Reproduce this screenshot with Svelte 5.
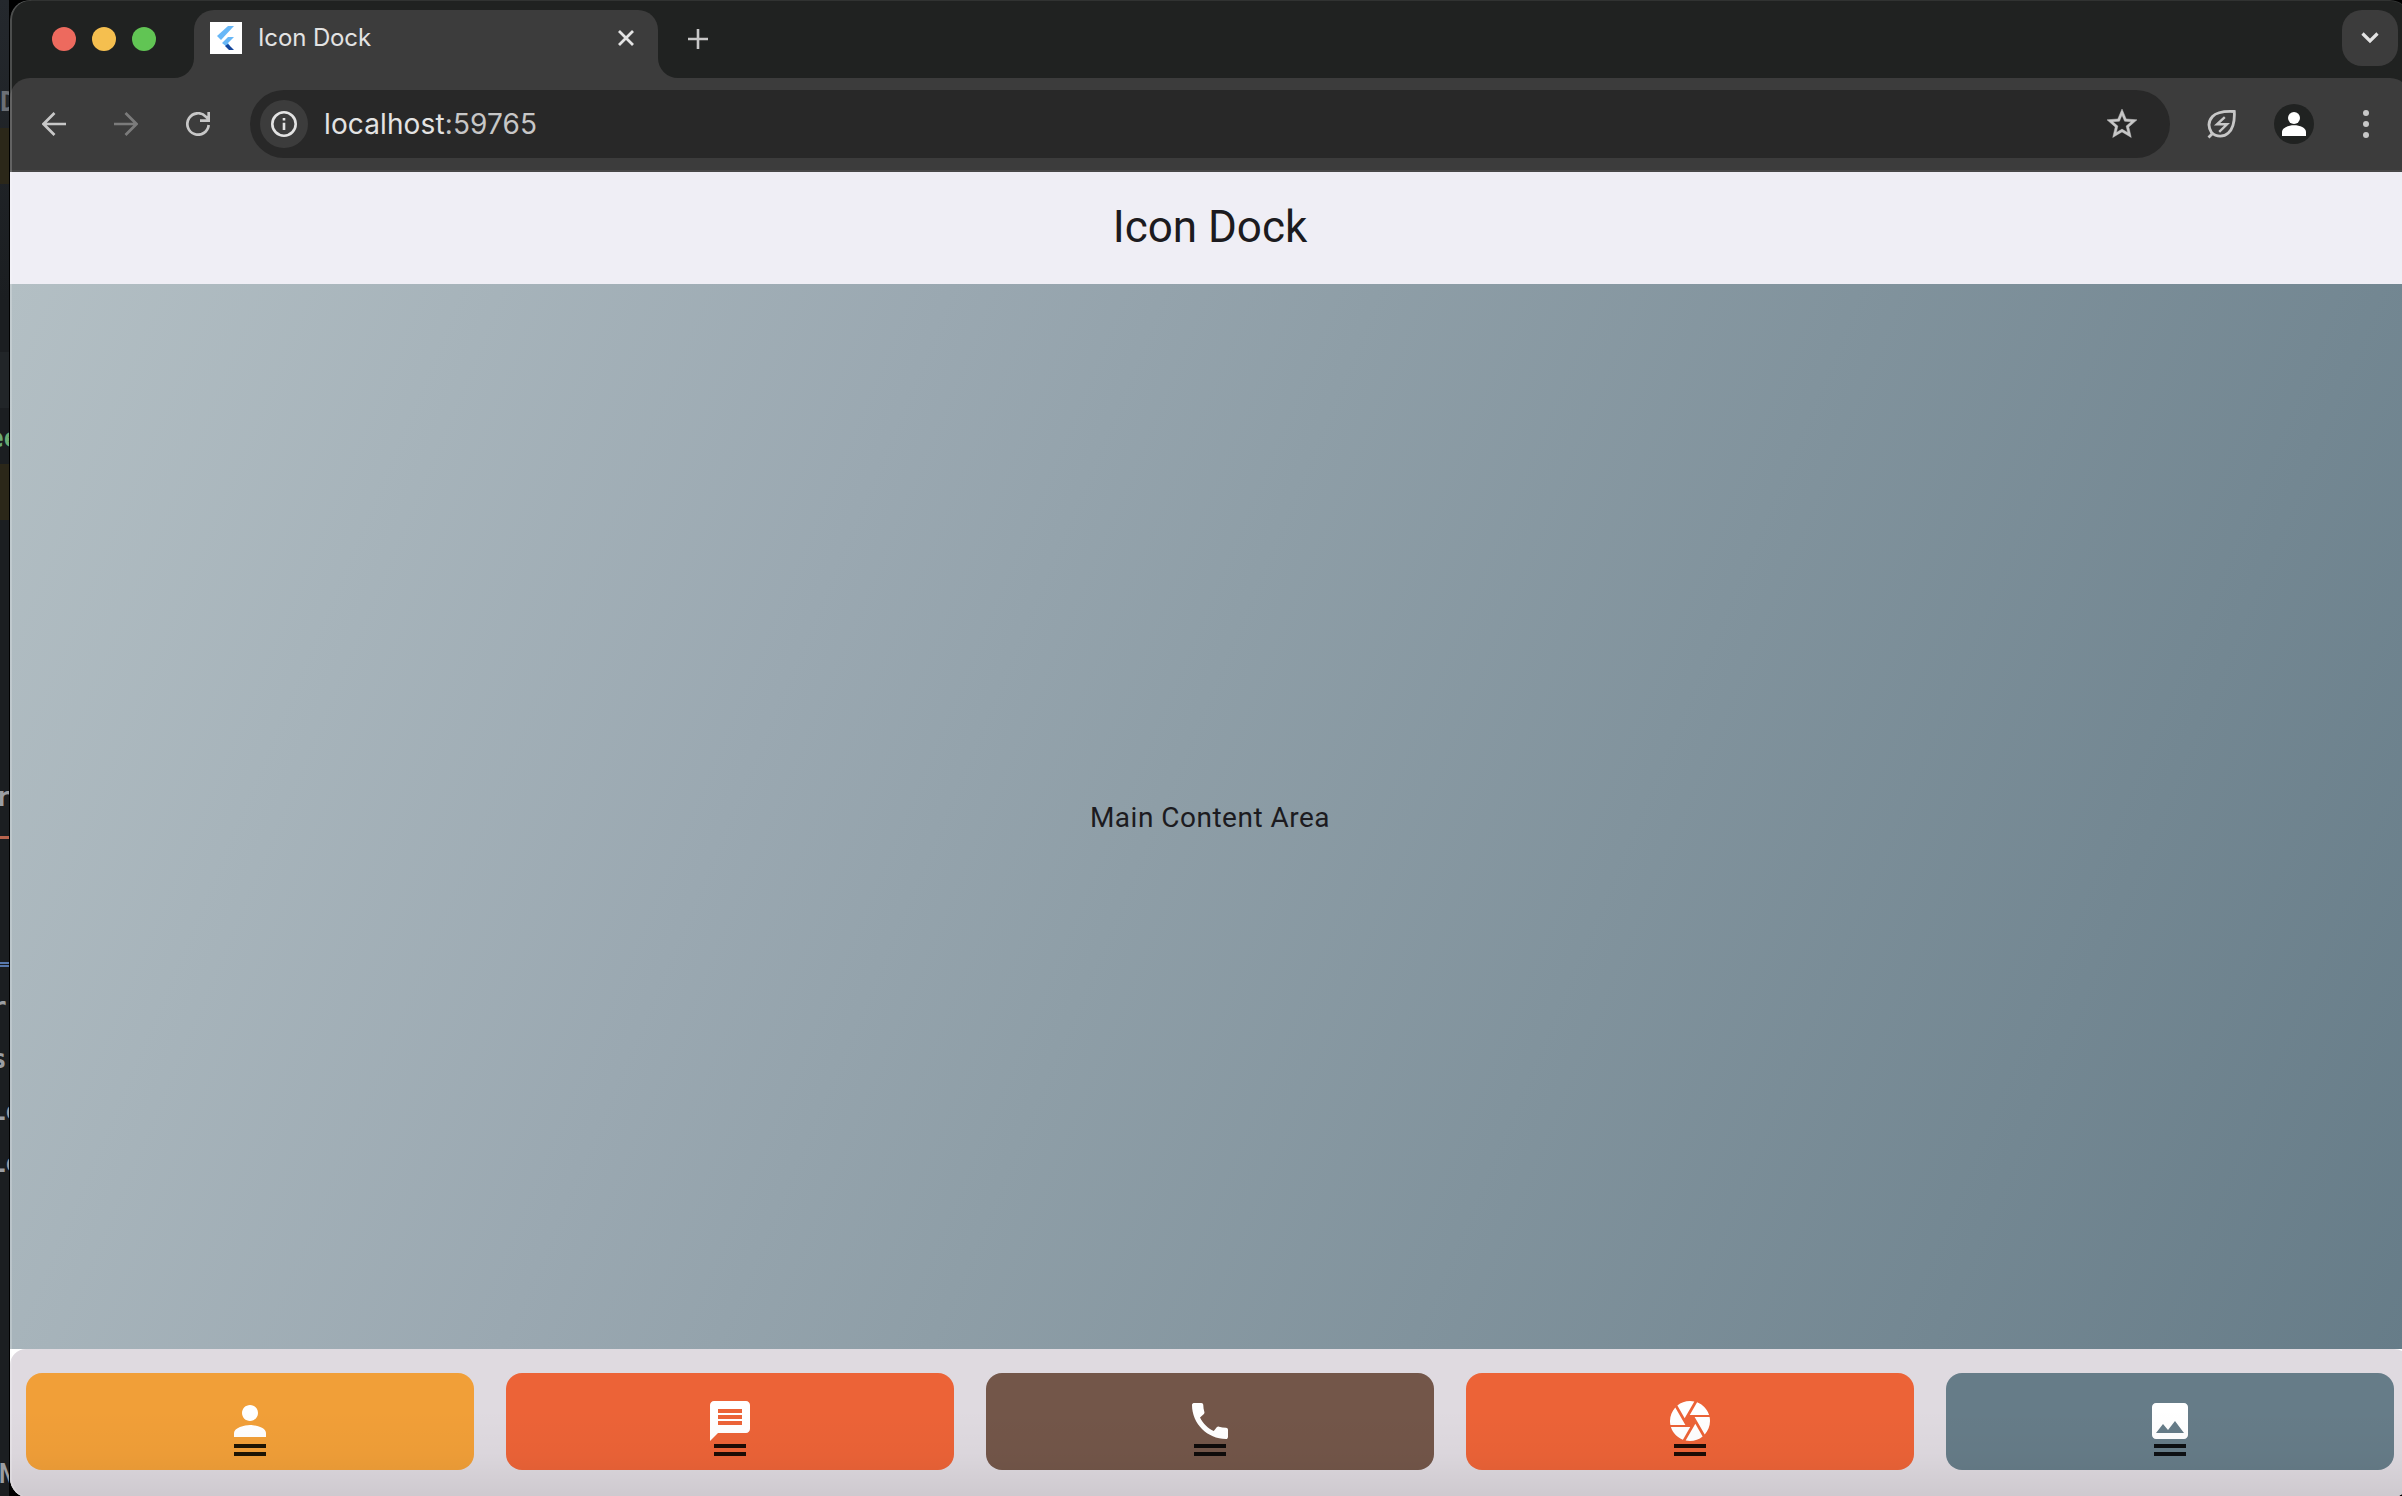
<script>
  const cards = [
    { name: 'person', color: '#f19f38', ink: '#1e1504', path: 'M12 12c2.21 0 4-1.79 4-4s-1.79-4-4-4-4 1.79-4 4 1.79 4 4 4zm0 2c-2.67 0-8 1.34-8 4v2h16v-2c0-2.66-5.33-4-8-4z' },
    { name: 'message', color: '#ec6337', ink: '#1d0c05', path: 'M20 2H4c-1.1 0-1.99.9-1.99 2L2 22l4-4h14c1.1 0 2-.9 2-2V4c0-1.1-.9-2-2-2zm-2 12H6v-2h12v2zm0-3H6V9h12v2zm0-3H6V6h12v2z' },
    { name: 'call', color: '#735649', ink: '#0e0b0a', path: 'M20.01 15.38c-1.23 0-2.42-.2-3.53-.56-.35-.12-.74-.03-1.01.24l-1.57 1.97c-2.83-1.35-5.48-3.9-6.89-6.83l1.95-1.66c.27-.28.35-.67.24-1.02-.37-1.11-.56-2.3-.56-3.53 0-.54-.45-.99-.99-.99H4.19C3.65 3 3 3.24 3 3.99 3 13.28 10.73 21 20.01 21c.71 0 .99-.63.99-1.18v-3.45c0-.54-.45-.99-.99-.99z' },
    { name: 'camera', color: '#ec6337', ink: '#1d0c05', path: 'M9.4 10.5l4.77-8.26C13.47 2.09 12.75 2 12 2c-2.4 0-4.6.85-6.32 2.25l3.66 6.35.06-.1zM21.54 9c-.92-2.92-3.15-5.26-6-6.34L11.88 9h9.66zm.26 1h-7.49l.29.5 4.76 8.25C21 16.97 22 14.61 22 12c0-.69-.07-1.35-.2-2zM8.54 12l-3.9-6.75C3.01 7.03 2 9.39 2 12c0 .69.07 1.35.2 2h7.49l-1.15-2zm-6.08 3c.92 2.92 3.15 5.26 6 6.34L12.12 15H2.46zm11.27 0l-3.9 6.76c.7.15 1.42.24 2.17.24 2.4 0 4.6-.85 6.32-2.25l-3.66-6.35-.93 1.6z' },
    { name: 'photo', color: '#667c88', ink: '#0d1013', path: 'M21 19V5c0-1.1-.9-2-2-2H5c-1.1 0-2 .9-2 2v14c0 1.1.9 2 2 2h14c1.1 0 2-.9 2-2zM8.500 13.500l2.500 3.010L14.500 12l4.500 6H5l3.500-4.500z' }
  ];
  // Fragments of the editor visible behind the browser window
  const scraps = [
    { t: 'D', y: 87, x: 0, c: '#6b6f75' },
    { t: 'ee', y: 423, x: -12, c: '#6aab73' },
    { t: 'r', y: 782, x: -4, c: '#9b9ea3' },
    { t: 'r', y: 992, x: -9, c: '#9b9ea3' },
    { t: 's', y: 1044, x: -9, c: '#9b9ea3' },
    { t: 'Lo', y: 1096, x: -10, c: '#9b9ea3' },
    { t: 'Lo', y: 1148, x: -10, c: '#9b9ea3' },
    { t: 'N', y: 1459, x: -1, c: '#9b9ea3' }
  ];
  const bands = [
    { y: 128, h: 56, c: '#2b2719' },
    { y: 352, h: 56, c: '#212528' },
    { y: 464, h: 56, c: '#2b2719' },
    { y: 836, h: 3, c: '#b8644e' },
    { y: 962, h: 2, c: '#5878ad' },
    { y: 965, h: 2, c: '#5878ad' }
  ];
</script>

<div class="desktop">
  <div class="editor">
    {#each bands as b}<i class="band" style="top:{b.y}px;height:{b.h}px;background:{b.c}"></i>{/each}
    {#each scraps as s}<span class="scrap" style="top:{s.y}px;left:{s.x}px;color:{s.c}">{s.t}</span>{/each}
  </div>
  <main class="window">
    <header class="tabs">
      <div class="lights"><i class="red"></i><i class="yellow"></i><i class="green"></i></div>
      <div class="tab">
        <svg class="flare left" viewBox="0 0 20 20"><path d="M20 0V20H0A20 20 0 0 0 20 0z" fill="#3c3c3c"/></svg>
        <svg class="favicon" viewBox="0 0 32 32">
          <path fill="#fff" d="M0 0h32v32H0z"/>
          <path fill="#67b7f7" d="M18 4h6L11 18l-4-4z"/>
          <path fill="#67b7f7" d="M18 15h6l-6 6 2 3-3 1-5-4z"/>
          <path fill="#13459c" d="M15 24l3-2 6 6h-5z"/>
        </svg>
        <span>Icon Dock</span>
        <svg class="close" viewBox="0 0 16 16"><path d="M1 1l14 14M15 1L1 15" stroke="#e3e3e3" stroke-width="2.8"/></svg>
        <svg class="flare right" viewBox="0 0 20 20"><path d="M0 0V20H20A20 20 0 0 1 0 0z" fill="#3c3c3c"/></svg>
      </div>
      <svg class="plus" viewBox="0 0 20 20"><path d="M10 0v20M0 10h20" stroke="#c7c7c7" stroke-width="2.6"/></svg>
      <div class="search">
        <svg viewBox="0 0 18 12"><path d="M1.5 1.5L9 9l7.500-7.500" fill="none" stroke="#e3e3e3" stroke-width="3.2"/></svg>
      </div>
    </header>
    <nav class="toolbar">
      <svg class="nav back" viewBox="0 0 24 24"><path d="M24 12H2M12.500 1L1.500 12l11 11" fill="none" stroke="#c7c7c7" stroke-width="2.7"/></svg>
      <svg class="nav fwd" viewBox="0 0 24 24"><path d="M0 12h22M11.500 1l11 11-11 11" fill="none" stroke="#7b7b7b" stroke-width="2.7"/></svg>
      <svg class="nav reload" viewBox="0 0 24 24"><path d="M22.700 13A10.700 10.700 0 1 1 20 4.800L22.700 7.500M22.700 0v8.700H14" fill="none" stroke="#c7c7c7" stroke-width="2.700"/></svg>
      <div class="omnibox">
        <div class="info">
          <svg viewBox="0 0 26 26"><circle cx="13" cy="13" r="11.700" fill="none" stroke="#e3e3e3" stroke-width="2.600"/><path d="M11.700 11.700h2.600V19h-2.600zM11.700 7h2.600v2.600h-2.600z" fill="#e3e3e3"/></svg>
        </div>
        <span class="url">localhost<em>:59765</em></span>
        <svg class="star" viewBox="0 0 24 24"><path fill="#c7c7c7" stroke="#c7c7c7" stroke-width=".3" d="M22 9.240l-7.190-.62L12 2 9.190 8.630 2 9.240l5.460 4.730L5.820 21 12 17.270 18.180 21l-1.630-7.030L22 9.240zM12 15.400l-3.760 2.270 1-4.280-3.320-2.880 4.380-.38L12 6.100l1.710 4.040 4.380.38-3.320 2.880 1 4.280L12 15.400z"/></svg>
      </div>
      <svg class="leaf" viewBox="0 0 30 30">
        <path d="M27.300 2.500C18 2 10 2.500 5.500 7.500 1.500 12 1 18 4.500 23.500c5 5 12.500 4.500 16.800.5 5.500-5 6.500-12 6-21.500zM1.500 28.500l4-4" fill="none" stroke="#c7c7c7" stroke-width="2.800"/>
        <path d="M17.800 8.200L10 15.300h10L12.200 22.800" fill="none" stroke="#c7c7c7" stroke-width="2.400"/>
      </svg>
      <div class="avatar"><svg viewBox="0 0 24 24"><circle cx="12" cy="6" r="6" fill="#fff"/><path d="M0 24v-4c0-4 6-6.700 12-6.700s12 2.700 12 6.700v4z" fill="#fff"/></svg></div>
      <div class="dots"><i></i><i></i><i></i></div>
    </nav>
    <div class="appbar">Icon Dock</div>
    <section class="content">Main Content Area</section>
    <div class="dockwrap">
      <div class="dock">
        {#each cards as c (c.name)}
          <div class="card" style="background:{c.color};color:{c.ink}">
            <svg viewBox="0 0 24 24"><path fill="#fff" d={c.path} /></svg>
            <i class="bar"></i><i class="bar"></i>
          </div>
        {/each}
      </div>
    </div>
    <i class="edge"></i>
  </main>
</div>

<style>
  .desktop { position: relative; width: 2402px; height: 1496px; overflow: hidden; display: flex; background: #000; }
  .editor { position: relative; flex: none; width: 9px; overflow: hidden; background: linear-gradient(#24282d, #1b1e21 300px); border-right: 1px solid #000; }
  .band { position: absolute; left: 0; width: 9px; }
  .scrap { position: absolute; font: bold 26px/30px "DejaVu Sans Mono", monospace; }
  .window { position: relative; flex: none; width: 2400px; height: 1498px; border-radius: 20px; overflow: hidden; display: flex; flex-direction: column; background: #202221; }
  .edge { position: absolute; inset: 0; border-radius: 20px; box-shadow: inset 2px 0 rgba(255, 255, 255, .2), inset 0 1px rgba(255, 255, 255, .08); }
  .tabs { height: 78px; flex: none; display: flex; align-items: center; }
  .lights { display: flex; gap: 16px; margin-left: 42px; }
  .lights i { width: 24px; height: 24px; border-radius: 50%; }
  .red { background: #ed6a5e; }
  .yellow { background: #f5bf4f; }
  .green { background: #61c554; }
  .tab { position: relative; box-sizing: border-box; width: 464px; height: 68px; margin: 10px 0 0 38px; padding: 0 24px 12px 16px; border-radius: 20px 20px 0 0; background: #3c3c3c; display: flex; align-items: center; color: #e3e3e3; font: 24px Inter, sans-serif; letter-spacing: -.12px; }
  .tab span { margin: -1px 0 0 16px; flex: 1; }
  .flare { position: absolute; bottom: 0; width: 20px; height: 20px; }
  .left { left: -20px; }
  .right { right: -20px; }
  .favicon { width: 32px; height: 32px; }
  .close { width: 16px; height: 16px; }
  .plus { width: 20px; height: 20px; margin-left: 30px; }
  .search { width: 56px; height: 56px; border-radius: 20px; background: #3c3c3c; margin: 0 12px 2px auto; display: flex; align-items: center; justify-content: center; }
  .search svg { width: 18px; height: 12px; }
  .toolbar { height: 94px; box-sizing: border-box; flex: none; background: #3c3c3c; border-bottom: 2px solid #474747; border-radius: 20px 20px 0 0; display: flex; align-items: center; padding: 0 0 0 32px; }
  .nav { width: 24px; height: 24px; }
  .fwd { margin-left: 48px; }
  .reload { margin-left: 48px; }
  .omnibox { width: 1920px; height: 68px; margin-left: 40px; border-radius: 34px; background: #282828; display: flex; align-items: center; box-sizing: border-box; padding: 0 30px 0 10px; }
  .info { width: 48px; height: 48px; border-radius: 50%; background: #3c3c3c; display: flex; align-items: center; justify-content: center; }
  .info svg { width: 26px; height: 26px; }
  .url { margin-left: 16px; flex: 1; color: #e3e3e3; font: 28px Inter, sans-serif; letter-spacing: .12px; }
  .url em { font-style: normal; color: #c7c7c7; }
  .star { width: 36px; height: 36px; }
  .leaf { width: 30px; height: 30px; margin-left: 37px; }
  .avatar { width: 40px; height: 40px; border-radius: 50%; background: #202221; margin-left: 37px; display: flex; align-items: center; justify-content: center; }
  .avatar svg { width: 24px; height: 24px; }
  .dots { margin-left: 49px; display: flex; flex-direction: column; gap: 5px; }
  .dots i { width: 6px; height: 6px; border-radius: 50%; background: #c7c7c7; }
  .appbar { height: 112px; box-sizing: border-box; padding-bottom: 2px; flex: none; background: #efeef5; color: #1c1b20; display: flex; align-items: center; justify-content: center; font: 44px Roboto, sans-serif; }
  .content { height: 1065px; box-sizing: border-box; padding-top: 2px; flex: none; display: flex; align-items: center; justify-content: center; background: linear-gradient(113deg, #b3bfc4, #9aa8b1 33%, #8e9ea7 48%, #667c88); color: #1c1b20; font: 28px Roboto, sans-serif; letter-spacing: .5px; }
  .dockwrap { position: relative; flex: 1; background: #fff; }
  .dock { height: 100%; box-sizing: border-box; padding: 24px 16px 28px; border-radius: 16px 16px 0 0; background: #dfdae0; display: grid; grid-template-columns: repeat(5, 1fr); gap: 32px; }
  .card { border-radius: 16px; display: flex; flex-direction: column; align-items: center; padding-top: 24px; }
  .card svg { width: 48px; height: 48px; margin-bottom: -1px; flex: none; }
  .bar { width: 32px; height: 4px; background: currentColor; margin-bottom: 4px; }
  .dockwrap::after { content: ""; position: absolute; inset: 60px 0 0; background: linear-gradient(transparent, rgba(0, 0, 0, .02) 50%, rgba(0, 0, 0, .08)); }
</style>
